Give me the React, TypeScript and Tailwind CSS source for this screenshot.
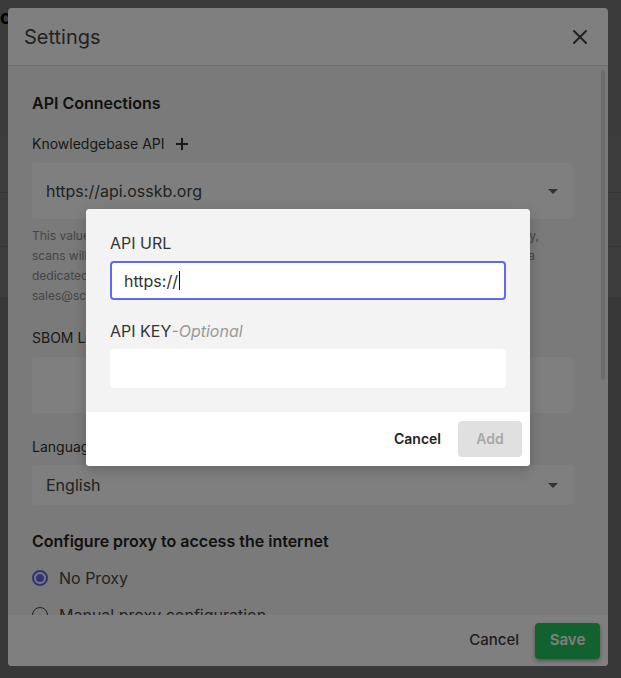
import React from "react";

function Caret() {
  return (
    <svg width="10" height="5" viewBox="0 0 10 5" aria-hidden="true">
      <path d="M0 0h10L5 5z" fill="#666" />
    </svg>
  );
}

function CloseIcon() {
  return (
    <svg width="14" height="14" viewBox="0 0 14 14" aria-hidden="true">
      <path d="M1 1l12 12M13 1L1 13" stroke="#444" strokeWidth="2" strokeLinecap="square" />
    </svg>
  );
}

function PlusIcon() {
  return (
    <svg width="12" height="12" viewBox="0 0 12 12" aria-hidden="true">
      <path d="M6 0v12M0 6h12" stroke="#333" strokeWidth="2" />
    </svg>
  );
}

export default function App() {
  return (
    <div className="relative h-screen w-full overflow-hidden bg-[#e2e2e2] font-['Inter','Noto_Sans',sans-serif]">
      {/* page behind */}
      <div className="flex flex-col">
        <div className="h-[70px] bg-[#ececec] pt-[6px]">
          <div className="text-[19px] font-bold leading-6 text-black">cl</div>
        </div>
        <div className="h-[67px] bg-[#eeeeee]" />
        <div className="h-[56px] border-b border-[#d2d2d2] bg-[#f4f4f4]" />
        <div className="h-[54px] border-b border-[#d2d2d2] bg-[#f6f6f6]" />
        <div className="h-[51px] border-b border-[#d8d8d8] bg-[#f2f2f2]" />
      </div>

      {/* overlay 1 */}
      <div className="absolute inset-0 bg-black/50" />

      {/* settings dialog */}
      <div className="absolute left-[8px] top-[8px] flex h-[658px] w-[600px] flex-col overflow-hidden rounded-[4px] bg-white">
        <div className="flex h-[58px] shrink-0 items-center justify-between border-b border-[#d9d9d9] pl-4 pr-[21px]">
          <span className="text-[20px] leading-7 text-[#444]">Settings</span>
          <CloseIcon />
        </div>

        <div className="relative flex-1 overflow-hidden bg-[#f5f5f5]">
          <div className="pl-6 pr-[35px] pt-[25px]">
            <div className="text-base font-semibold leading-6 text-[#222]">API Connections</div>

            <div className="mt-[19px] flex items-center gap-[11px] text-sm leading-5 text-[#333]">
              <span>Knowledgebase API</span>
              <PlusIcon />
            </div>
            <div className="mt-[9px] flex h-14 items-center justify-between rounded-[4px] bg-white pl-[14px] pr-[15px] text-base text-[#444]">
              <span>https://api.osskb.org</span>
              <Caret />
            </div>

            <div className="mt-[7px] text-xs leading-5 text-[#8c8c8c]">
              <div className="flex w-[507px] justify-between whitespace-nowrap">
                <span>This value is used as the default API for new scans. Without a valid API</span>
                <span>key,</span>
              </div>
              <div className="flex w-[503px] justify-between whitespace-nowrap">
                <span>scans will be processed by the free public service at a reduced rate. For</span>
                <span>a</span>
              </div>
              <div>dedicated service with higher throughput, please contact us at</div>
              <div>sales@scanoss.com</div>
            </div>

            <div className="mt-[22px] text-sm leading-5 text-[#333]">SBOM Ledger Token</div>
            <div className="mt-[9px] h-14 rounded-[4px] bg-white" />

            <div className="mt-6 text-sm leading-5 text-[#333]">Language</div>
            <div className="mt-2 flex h-10 items-center justify-between rounded-[4px] bg-white pl-[14px] pr-[15px] text-base text-[#444]">
              <span>English</span>
              <Caret />
            </div>

            <div className="mt-6 text-base font-semibold leading-6 text-[#222]">
              Configure proxy to access the internet
            </div>

            <div className="mt-[13px] flex items-center gap-[11px] leading-6">
              <span className="flex h-4 w-4 items-center justify-center rounded-full border-2 border-[#6366f1]">
                <span className="h-2 w-2 rounded-full bg-[#6366f1]" />
              </span>
              <span className="text-base text-[#444]">No Proxy</span>
            </div>
            <div className="mt-[13px] flex items-center gap-[11px] leading-6">
              <span className="h-4 w-4 rounded-full border-[1.5px] border-[#444]" />
              <span className="text-base text-[#444]">Manual proxy configuration</span>
            </div>
          </div>

          {/* scrollbar thumb */}
          <div className="absolute right-[3px] top-[4px] h-[310px] w-[4px] rounded-full bg-[#dadada]" />
        </div>

        <div className="flex h-[51px] shrink-0 items-center justify-end gap-4 bg-white pr-2">
          <button className="text-[15px] font-medium text-[#3a3a3a]">Cancel</button>
          <button className="h-9 w-[65px] rounded-[4px] bg-[#22c55e] text-[15px] font-semibold text-white shadow-[0_2px_4px_rgba(0,0,0,0.35)]">
            Save
          </button>
        </div>
      </div>

      {/* overlay 2 */}
      <div className="absolute inset-0 bg-black/50" />

      {/* add API modal */}
      <div className="absolute left-[86px] top-[209px] w-[444px] overflow-hidden rounded-[4px] bg-white shadow-[0_4px_14px_rgba(0,0,0,0.2)]">
        <div className="bg-[#f3f3f3] px-6 pb-6 pt-[22px]">
          <div className="text-base leading-6 text-[#333]">API URL</div>
          <div className="mt-[6px] flex h-[39px] items-center rounded-[4px] border-2 border-[#6366f1] bg-white px-3 text-base text-[#333]">
            <span>https://</span>
            <span className="ml-[1px] h-[19px] w-px bg-[#111]" />
          </div>
          <div className="mt-[19px] text-base leading-6 text-[#333]">
            API KEY<span className="italic text-[#999]">-Optional</span>
          </div>
          <div className="mt-[6px] h-[39px] rounded-[4px] bg-white" />
        </div>
        <div className="flex h-[54px] items-center justify-end gap-[17px] bg-white pr-2">
          <button className="text-sm font-semibold text-[#222]">Cancel</button>
          <button className="h-9 w-16 rounded-[4px] bg-[#e0e0e0] text-sm font-semibold text-[#a8a8a8]">
            Add
          </button>
        </div>
      </div>
    </div>
  );
}
